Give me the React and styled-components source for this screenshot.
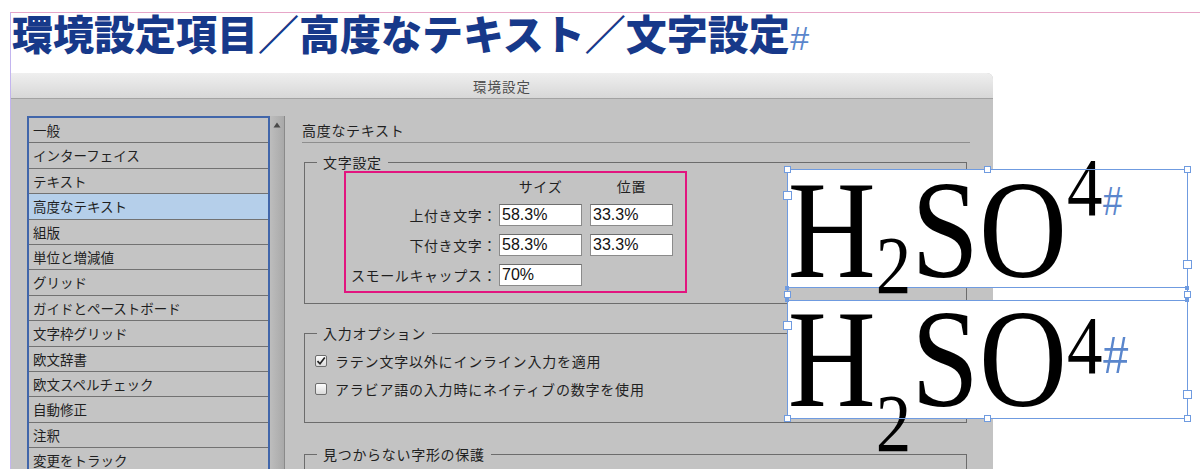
import React from "react";
import styled, { createGlobalStyle } from "styled-components";

const ITEMS = [
	"一般",
	"インターフェイス",
	"テキスト",
	"高度なテキスト",
	"組版",
	"単位と増減値",
	"グリッド",
	"ガイドとペーストボード",
	"文字枠グリッド",
	"欧文辞書",
	"欧文スペルチェック",
	"自動修正",
	"注釈",
	"変更をトラック",
	"ストーリーエディター",
];

const ROWS = [
	{ label: "上付き文字：", size: "58.3%", pos: "33.3%" },
	{ label: "下付き文字：", size: "58.3%", pos: "33.3%" },
	{ label: "スモールキャップス：", size: "70%" },
];

// selection handles on the canvas, relative to the selection box
const HANDLES = [
	[0, 0], [200, 0], [400, 0],
	[0, 124.5], [400, 124.5],
	[0, 249], [200, 249], [400, 249],
];

function CheckMark() {
	return (
		<svg width="10" height="10" viewBox="0 0 10 10">
			<path d="M1.5 5.2 L4 7.8 L8.8 1.6" fill="none" stroke="#222" strokeWidth="1.7" />
		</svg>
	);
}

function Formula({ sub, sup, hash, lineHeight }) {
	return (
		<FormulaText $lh={lineHeight}>
			H<Shift $dy={sub}>2</Shift>SO<Shift $dy={sup}>4<FrameHash $size={hash}>#</FrameHash></Shift>
		</FormulaText>
	);
}

function App() {
	return (
		<Page>
			<GlobalStyle />
			<Sheet>
				<Heading>
					環境設定項目／高度なテキスト／文字設定<Hash>#</Hash>
				</Heading>
				<Dialog>
					<TitleBar>環境設定</TitleBar>
					<DialogBody>
						<ListFrame>
							<List>
								{ITEMS.map((item) => (
									<Item key={item} $selected={item === "高度なテキスト"}>
										{item}
									</Item>
								))}
							</List>
							<Scrollbar>
								<svg width="8" height="6" viewBox="0 0 8 6">
									<path d="M4 0.5 L7.5 5.5 L0.5 5.5 Z" fill="#4a4a4a" />
								</svg>
							</Scrollbar>
						</ListFrame>

						<Panel>
							<PanelHeader>高度なテキスト</PanelHeader>

							<Group $mt={9}>
								<Legend>文字設定</Legend>
								<Highlight>
									<HeadRow>
										<ColHead>サイズ</ColHead>
										<ColHead $second>位置</ColHead>
									</HeadRow>
									{ROWS.map((row) => (
										<FieldRow key={row.label}>
											<FieldLabel>{row.label}</FieldLabel>
											<Field readOnly value={row.size} />
											{row.pos && <Field $second readOnly value={row.pos} />}
										</FieldRow>
									))}
								</Highlight>
							</Group>

							<Group $mt={19}>
								<Legend>入力オプション</Legend>
								<Options>
									<CheckRow>
										<Box>
											<CheckMark />
										</Box>
										ラテン文字以外にインライン入力を適用
									</CheckRow>
									<CheckRow>
										<Box />
										アラビア語の入力時にネイティブの数字を使用
									</CheckRow>
								</Options>
							</Group>

							<Group $mt={21}>
								<Legend>見つからない字形の保護</Legend>
								<Options>
									<CheckRow>
										<Box>
											<CheckMark />
										</Box>
										入力時に保護
									</CheckRow>
								</Options>
							</Group>
						</Panel>
					</DialogBody>
				</Dialog>
			</Sheet>

			<Selection>
				<TextFrame $top={0} $edge="bottom">
					<Formula sub={16} sup={-62} hash={40} lineHeight={122} />
				</TextFrame>
				<TextFrame $top={131} $edge="top">
					<Formula sub={45} sup={-33} hash={52} lineHeight={116} />
				</TextFrame>
				<Outline />
				<Port style={{ left: 0, top: 26 }} />
				<Port style={{ left: 400, top: 95 }} />
				<Port style={{ left: 0, top: 156 }} />
				<Port style={{ left: 400, top: 225 }} />
				<Dot style={{ left: 0, top: 119 }} />
				<Dot style={{ left: 400, top: 119 }} />
				<Dot style={{ left: 0, top: 131 }} />
				<Dot style={{ left: 400, top: 131 }} />
				{HANDLES.map(([x, y]) => (
					<Handle key={`${x}-${y}`} style={{ left: x, top: y }} />
				))}
			</Selection>
		</Page>
	);
}

// * ====================== STYLES ======================
const GlobalStyle = createGlobalStyle`
	html, body {
		margin: 0;
		padding: 0;
		background: #fff;
		overflow: hidden;
	}
	body {
		font-family: "Noto Sans CJK JP", "Noto Sans", sans-serif;
	}
`;

const Page = styled.div`
	position: relative;
	width: 1200px;
	height: 469px;
	overflow: hidden;
	background: #fff;
`;

const Sheet = styled.div`
	margin: 12px 0 0 10px;
	height: 457px;
	border-top: 1px solid #e7a6c8;
	border-left: 1px solid #c3b5ef;
`;

const Heading = styled.h1`
	height: 38px;
	margin: 0 0 22px 1px;
	font: 900 41px/38px "Noto Sans CJK JP", sans-serif;
	color: #17398a;
	white-space: nowrap;
`;

const Hash = styled.span`
	font: italic 400 34px/0 "Liberation Sans", sans-serif;
	color: #5a86cc;
`;

const Dialog = styled.div`
	width: 982px;
	background: #c3c3c3;
	border-top-right-radius: 6px;
`;

const TitleBar = styled.div`
	height: 25px;
	display: flex;
	align-items: center;
	justify-content: center;
	border-bottom: 1px solid #a2a2a2;
	border-top-right-radius: 6px;
	background: linear-gradient(#efefef, #d7d7d7);
	font-size: 13.5px;
	letter-spacing: 1px;
	color: #4d4d4d;
`;

const DialogBody = styled.div`
	display: flex;
	align-items: flex-start;
	padding: 17px 0 0 16px;
`;

const ListFrame = styled.div`
	display: flex;
`;

const List = styled.ul`
	list-style: none;
	margin: 0;
	padding: 0;
	width: 239px;
	border: 2px solid #4166aa;
	background: #c4c4c4;
`;

const Item = styled.li`
	height: 24.4px;
	line-height: 24.4px;
	padding-left: 4px;
	border-bottom: 1px solid #727272;
	background: ${(p) => (p.$selected ? "#b5cfea" : "transparent")};
	font-size: 13.5px;
	color: #1f1f1f;
	white-space: nowrap;
`;

const Scrollbar = styled.div`
	width: 14px;
	display: flex;
	justify-content: center;
	align-items: flex-start;
	padding-top: 6px;
	background: linear-gradient(to right, #bdbdbd, #a9a9a9);
	border-right: 1px solid #8a8a8a;
`;

const Panel = styled.div`
	width: 668px;
	margin-left: 17px;
	font-size: 14px;
	letter-spacing: 0.7px;
	color: #1f1f1f;
`;

const PanelHeader = styled.div`
	padding: 4px 0 2px;
	line-height: 20px;
	border-bottom: 1px solid #8e8e8e;
`;

const Group = styled.fieldset`
	margin: ${(p) => p.$mt}px 3px 0 2px;
	padding: 0;
	min-width: 0;
	border: 1px solid #6c6c6c;
`;

const Legend = styled.legend`
	margin-left: 12px;
	padding: 0 6px;
	line-height: 20px;
`;

const Highlight = styled.div`
	width: 331px;
	margin: -1px 0 10px 39px;
	padding: 3px 4px 5px;
	display: flex;
	flex-direction: column;
	gap: 8px;
	border: 2px solid #e2157f;
`;

const HeadRow = styled.div`
	display: flex;
	height: 20px;
	line-height: 20px;
	padding-left: 149px;
`;

const ColHead = styled.div`
	width: 83px;
	margin-left: ${(p) => (p.$second ? 8 : 0)}px;
	text-align: center;
`;

const FieldRow = styled.div`
	display: flex;
	align-items: center;
	height: 22px;
`;

const FieldLabel = styled.span`
	width: 147px;
	margin-right: 2px;
	text-align: right;
	letter-spacing: 0.6px;
	white-space: nowrap;
`;

const Field = styled.input`
	box-sizing: border-box;
	width: 83px;
	height: 22px;
	margin: 0 0 0 ${(p) => (p.$second ? 8 : 0)}px;
	padding: 0 2px;
	border: 1px solid #8b8b8b;
	border-top-color: #6e6e6e;
	border-radius: 0;
	background: #fff;
	font: 16px "Liberation Sans", Arial, sans-serif;
	color: #111;
	outline: none;
`;

const Options = styled.div`
	display: flex;
	flex-direction: column;
	gap: 8px;
	padding: 8px 0 23px 10px;
`;

const CheckRow = styled.label`
	display: flex;
	align-items: center;
	gap: 8px;
	height: 20px;
	letter-spacing: 0.8px;
	white-space: nowrap;
`;

const Box = styled.span`
	box-sizing: border-box;
	width: 12px;
	height: 12px;
	display: flex;
	align-items: center;
	justify-content: center;
	border: 1px solid #6e6e6e;
	border-radius: 2px;
	background: linear-gradient(#fdfdfd, #dadada);
`;

const Selection = styled.div`
	position: absolute;
	left: 787px;
	top: 169px;
	width: 401px;
	height: 250px;
`;

const TextFrame = styled.div`
	position: absolute;
	left: 0;
	top: ${(p) => p.$top}px;
	box-sizing: border-box;
	width: 401px;
	height: 119px;
	background: #fff;
	border-${(p) => p.$edge}: 1px solid #6f9be0;
`;

const FormulaText = styled.div`
	padding-left: 1px;
	font-family: "Liberation Serif", "Times New Roman", serif;
	font-size: 140px;
	line-height: ${(p) => p.$lh}px;
	color: #000;
	white-space: nowrap;
	transform: scaleX(0.87);
	transform-origin: 0 0;
`;

const Shift = styled.span`
	position: relative;
	top: ${(p) => p.$dy}px;
	font-size: 58.3%;
`;

const FrameHash = styled.span`
	font: italic 400 ${(p) => p.$size}px "Liberation Sans", sans-serif;
	color: #5a86cc;
`;

const Outline = styled.div`
	position: absolute;
	inset: 0;
	border: 1px solid #6f9be0;
	pointer-events: none;
`;

const Handle = styled.span`
	position: absolute;
	width: 5px;
	height: 5px;
	margin: -3px 0 0 -3px;
	border: 1px solid #6f9be0;
	background: #fff;
`;

const Port = styled(Handle)`
	width: 7px;
	height: 7px;
	margin: -4px 0 0 -4px;
`;

const Dot = styled.span`
	position: absolute;
	width: 4px;
	height: 4px;
	margin: -2px 0 0 -2px;
	background: #6f9be0;
`;

export default App;
